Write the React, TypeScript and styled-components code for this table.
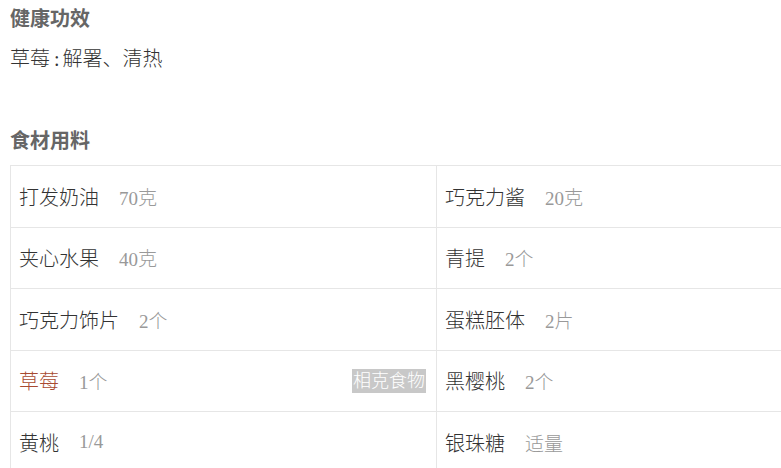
import React from "react";
import styled, { createGlobalStyle } from "styled-components";

const Global = createGlobalStyle`
  html, body {
    margin: 0;
    padding: 0;
    overflow: hidden;
    background: #fff;
  }
  body {
    font-family: "Liberation Serif", "Noto Sans CJK SC", serif;
  }
`;

const Page = styled.div`
  padding: 0 0 0 10px;
  overflow: hidden;
`;

const Title = styled.h3<{ $top?: number }>`
  margin: ${(p) => p.$top ?? 0}px 0 0;
  font-size: 20px;
  line-height: 38px;
  font-weight: bold;
  color: #666;
  font-family: "Liberation Serif", "Noto Sans CJK SC", serif;
`;

const Para = styled.p`
  margin: 1px 0 0;
  font-size: 20px;
  line-height: 40px;
  color: #333;
  font-weight: 300;
`;

const Colon = styled.span`
  margin: 0 3px 0 4px;
`;

const Table = styled.div`
  margin-top: 5px;
  display: grid;
  grid-template-columns: 426px 426px;
  width: 852px;
  border-top: 1px solid #e6e6e6;
  border-left: 1px solid #e6e6e6;
`;

const Cell = styled.div`
  box-sizing: border-box;
  height: 61.5px;
  border-right: 1px solid #e6e6e6;
  border-bottom: 1px solid #e6e6e6;
  padding: 0 10px 0 8px;
  display: flex;
  align-items: center;
  gap: 20px;
`;

const Name = styled.span<{ $hl?: boolean }>`
  font-size: 20px;
  font-weight: 300;
  color: ${(p) => (p.$hl ? "#a84a30" : "#333")};
`;

const Amount = styled.span`
  font-size: 19px;
  font-weight: 300;
  color: #999;
`;

const Badge = styled.span`
  margin-left: auto;
  background: #c8c8c8;
  color: #fff;
  font-size: 18px;
  font-weight: 300;
  line-height: 24px;
  padding: 0 1px;
`;

type Item = { name: string; amount: string; hl?: boolean; badge?: string };

const items: Item[] = [
  { name: "打发奶油", amount: "70克" },
  { name: "巧克力酱", amount: "20克" },
  { name: "夹心水果", amount: "40克" },
  { name: "青提", amount: "2个" },
  { name: "巧克力饰片", amount: "2个" },
  { name: "蛋糕胚体", amount: "2片" },
  { name: "草莓", amount: "1个", hl: true, badge: "相克食物" },
  { name: "黑樱桃", amount: "2个" },
  { name: "黄桃", amount: "1/4" },
  { name: "银珠糖", amount: "适量" },
];

export default function App() {
  return (
    <Page>
      <Global />
      <Title>健康功效</Title>
      <Para>
        草莓<Colon>:</Colon>解署、清热
      </Para>
      <Title $top={43}>食材用料</Title>
      <Table>
        {items.map((it, i) => (
          <Cell key={i}>
            <Name $hl={it.hl}>{it.name}</Name>
            <Amount>{it.amount}</Amount>
            {it.badge && <Badge>{it.badge}</Badge>}
          </Cell>
        ))}
      </Table>
    </Page>
  );
}
